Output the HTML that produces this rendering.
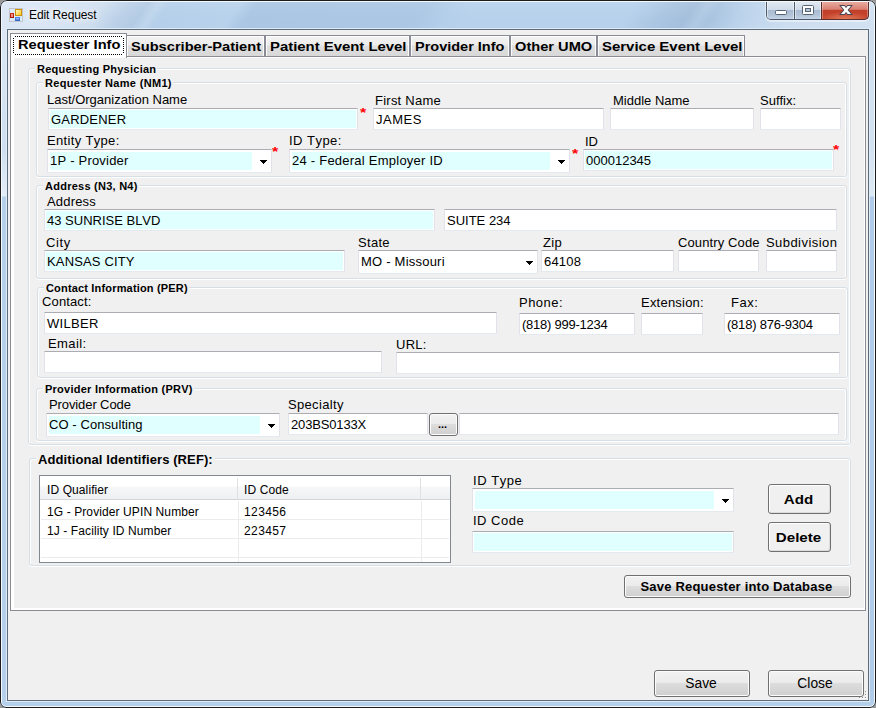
<!DOCTYPE html>
<html>
<head>
<meta charset="utf-8">
<title>Edit Request</title>
<style>
html,body{margin:0;padding:0;}
body{width:876px;height:708px;position:relative;overflow:hidden;background:#989898;
 font-family:"Liberation Sans",sans-serif;font-size:13px;color:#000;font-kerning:none;}
.win *{position:absolute;box-sizing:border-box;}
i{display:block;}
.win{position:absolute;left:0;top:0;width:876px;height:708px;box-sizing:border-box;
 border-radius:7px 7px 6px 6px;overflow:hidden;
 background:linear-gradient(180deg,rgba(255,255,255,.10) 0px,rgba(255,255,255,.03) 12px,rgba(255,255,255,0) 20px),linear-gradient(124deg,#dbe7f5 8.4px,#d8e5f4 58.0px,#cfdff0 87.0px,#bcd1e8 107.6px,#b3cbe5 124.2px,#bfd6ec 133.3px,#b5cfea 142.4px,#b8d2ec 200.3px,#aac6e3 215.2px,#abc7e4 355.7px,#b4cfea 380.5px,#b7d1ec 397.1px,#b7d1ec 529.4px,#aac5e1 558.4px,#a4bfdc 579.0px,#b0c9e3 589.8px,#a9c4e0 599.7px,#b9d1ea 620.4px,#c3d8ee 641.1px,#cddef0 670.0px,#d2e1f2 732.9px);}
.win .outer{left:0;top:0;width:876px;height:708px;border:1px solid #1c1c1c;border-radius:7px 7px 6px 6px;}
.win .edge{left:1px;top:1px;width:874px;height:706px;border:1px solid #f4f9fd;border-radius:6px 6px 5px 5px;}
.win .sideL{left:1px;top:29px;width:6px;height:677px;background:linear-gradient(180deg,#dbe7f4 0px,#cfdff1 120px,#e4edf8 167px,#b5d0ea 168px,#b5d0ea 100%);}
.win .sideR{left:869px;top:29px;width:6px;height:677px;background:linear-gradient(180deg,#d0e0f1 0px,#d3e2f2 120px,#dde9f5 167px,#b0cce8 168px,#b0cce8 100%);}
.win .sideB{left:2px;top:701px;width:872px;height:5px;background:#b5d0ea;}
.win .cglow{left:6px;top:28px;width:864px;height:674px;border:1px solid #dfecf8;}
.win .cborder{left:7px;top:29px;width:862px;height:672px;border:1px solid #5d6b7b;background:#f0f0f0;}
.title{left:29px;top:7px;font-size:12px;letter-spacing:-0.1px;line-height:16px;white-space:nowrap;text-shadow:0 0 5px rgba(255,255,255,.95),0 0 9px rgba(255,255,255,.8),0 0 12px rgba(255,255,255,.6);}
.l{white-space:nowrap;line-height:16px;font-size:13px;}
.s12{font-size:12px;letter-spacing:0.1px;}
.b11{white-space:nowrap;line-height:13px;font-size:11px;font-weight:bold;letter-spacing:0.25px;background:#f0f0f0;padding:0 1px 0 2px;}
.b13{white-space:nowrap;line-height:16px;font-size:13px;font-weight:bold;letter-spacing:0.1px;background:#f0f0f0;padding:0 2px 0 2px;}
.g{border:1px solid #d5dfe5;border-radius:3px;box-shadow:inset 1px 1px 0 #fff,inset -1px 0 0 #fff,0 1px 0 #fff;}
.t{border:1px solid #e2e3ea;border-top-color:#abadb3;border-bottom-color:#e3e9ef;background:#fff;font-size:13px;line-height:16px;white-space:nowrap;overflow:hidden;border-radius:1px;}
.t span{left:2px;top:3px;}
.t.c{background:#e0ffff;box-shadow:inset 0 0 0 1px #fff;}
.cy{background:#e0ffff;}
.star{color:#f00;font-weight:bold;font-size:16px;line-height:16px;transform:scaleY(0.82);transform-origin:0 3px;}
.arr{display:block;}
.btn{border:1px solid #707070;border-radius:3px;box-shadow:inset 0 0 0 1px #fcfcfc;
 background:linear-gradient(180deg,#f2f2f2 0%,#ebebeb 46%,#dddddd 50%,#cfcfcf 100%);white-space:nowrap;}
.btn.flat{background:#f0f0f0;box-shadow:inset 1px 1px 0 #fff,inset -1px -1px 0 #dcdcdc;}
.btn span{left:0;right:0;text-align:center;line-height:16px;}
.bb span{font-weight:bold;font-size:13.5px;top:7px;left:-2px;transform:scaleX(1.12);}
.bs span{font-weight:bold;font-size:13px;letter-spacing:0.2px;top:3px;left:-2px;}
.bn span{font-size:13.8px;top:5px;padding-right:2px;}
.tab{top:35px;height:21px;border:1px solid #898c95;border-bottom:none;font-weight:bold;font-size:13px;line-height:16px;white-space:nowrap;box-shadow:inset 1px 1px 0 rgba(255,255,255,.85),inset -1px 0 0 rgba(255,255,255,.85);
 background:linear-gradient(180deg,#f3f3f3 0%,#ececec 45%,#dfdfdf 50%,#d8d8d8 100%);}
.tab span{left:4px;top:3px;transform:scaleX(1.1);transform-origin:0 0;}
</style>
</head>
<body>
<div class="win">
 <div class="sideL"></div><div class="sideR"></div><div class="sideB"></div>
 <div class="cglow"></div>
 <div class="cborder"></div>

 <svg style="left:9px;top:8px" width="14" height="14" viewBox="0 0 14 14">
  <defs>
   <linearGradient id="gy" x1="0" y1="0" x2="1" y2="1"><stop offset="0" stop-color="#fff6c4"/><stop offset="1" stop-color="#ffc61a"/></linearGradient>
   <linearGradient id="gr" x1="0" y1="0" x2="0" y2="1"><stop offset="0" stop-color="#d8301f"/><stop offset="1" stop-color="#a31208"/></linearGradient>
   <linearGradient id="gb" x1="0" y1="0" x2="0" y2="1"><stop offset="0" stop-color="#5a90ee"/><stop offset="1" stop-color="#2c5fc8"/></linearGradient>
  </defs>
  <rect x="0.5" y="0.5" width="13" height="13" fill="#d6e6f8" fill-opacity=".5" stroke="#c3c5c9"/>
  <rect x="1" y="1" width="4" height="3" fill="#dcebfc"/><rect x="1" y="11" width="2" height="2" fill="#dcebfc"/><rect x="4" y="11" width="1" height="2" fill="#dcebfc"/><rect x="12" y="9" width="1" height="4" fill="#dcebfc"/>
  <rect x="1" y="5" width="4" height="5" fill="url(#gr)"/>
  <rect x="2" y="6" width="2" height="3" fill="#f3a196" opacity=".85"/>
  <rect x="6" y="1" width="7" height="7" fill="#c99208"/>
  <rect x="7" y="2" width="5" height="5" fill="url(#gy)"/>
  <rect x="6" y="9" width="5" height="4" fill="url(#gb)"/>
  <rect x="7" y="10" width="3" height="1.5" fill="#a4c2f8" opacity=".8"/>
 </svg>
 <div class="title">Edit Request</div>

 <div id="capbtns" style="left:766px;top:1px;width:103px;height:19px;border:1px solid #4c5a6b;border-top:none;border-radius:0 0 5px 5px;overflow:hidden;background:#c3d3e6;box-shadow:0 1px 0 1px rgba(255,255,255,.45);">
   <div style="left:0;top:0;width:28px;height:18px;background:linear-gradient(180deg,#e3ebf4 0%,#cfdbe9 48%,#a9bbd1 52%,#b4c5d9 80%,#c6d5e6 100%);border-right:1px solid #4c5a6b;box-shadow:inset 1px 0 0 rgba(255,255,255,.5),inset -1px 0 0 rgba(255,255,255,.5);"></div>
   <div style="left:28px;top:0;width:27px;height:18px;background:linear-gradient(180deg,#e3ebf4 0%,#cfdbe9 48%,#a9bbd1 52%,#b4c5d9 80%,#c6d5e6 100%);border-right:1px solid #4c5a6b;box-shadow:inset 1px 0 0 rgba(255,255,255,.5),inset -1px 0 0 rgba(255,255,255,.5);"></div>
   <div style="left:55px;top:0;width:46px;height:18px;background:radial-gradient(ellipse 24px 7px at 50% 100%,#e07a5a 0%,rgba(224,122,90,0) 100%),linear-gradient(180deg,#eab0a5 0%,#d98173 46%,#c23f29 52%,#c8482f 100%);box-shadow:inset 1px 0 0 rgba(255,255,255,.3),inset -1px 0 0 rgba(255,255,255,.3);"></div>
   <div style="left:8px;top:9px;width:12px;height:5px;background:#fff;border:1px solid #566373;border-radius:1.5px;"></div>
   <div style="left:35px;top:4px;width:12px;height:10px;background:#fff;border:1px solid #566373;border-radius:1.5px;"></div>
   <div style="left:38px;top:7px;width:6px;height:4px;background:#b5c5d9;border:1px solid #566373;"></div>
   <svg style="left:72px;top:3px;" width="14" height="12" viewBox="0 0 14 12"><defs><clipPath id="cx1"><rect x="0" y="1" width="14" height="10"/></clipPath><clipPath id="cx2"><rect x="0" y="2" width="14" height="8"/></clipPath></defs><g clip-path="url(#cx1)" stroke="#4a4752" stroke-width="4.3"><line x1="0.75" y1="-1.5" x2="13.25" y2="13.5"/><line x1="13.25" y1="-1.5" x2="0.75" y2="13.5"/></g><g clip-path="url(#cx2)" stroke="#fff" stroke-width="2.5"><line x1="0.75" y1="-1.5" x2="13.25" y2="13.5"/><line x1="13.25" y1="-1.5" x2="0.75" y2="13.5"/></g></svg>
 </div>

 <div style="left:10px;top:56px;width:856px;height:555px;border:1px solid #898c95;background:#fff;"></div>
 <div style="left:14px;top:58px;width:850px;height:550px;background:#f0f0f0;"></div>

 <div class="tab" style="left:126px;width:139px;"><span style="transform:scaleX(1.125)">Subscriber-Patient</span></div>
 <div class="tab" style="left:265px;width:145px;"><span style="transform:scaleX(1.145)">Patient Event Level</span></div>
 <div class="tab" style="left:410px;width:100px;"><span style="transform:scaleX(1.115)">Provider Info</span></div>
 <div class="tab" style="left:510px;width:87px;"><span style="transform:scaleX(1.125)">Other UMO</span></div>
 <div class="tab" style="left:597px;width:148px;"><span style="transform:scaleX(1.15)">Service Event Level</span></div>
 <div class="tab" style="left:10px;top:33px;width:117px;height:25px;background:#fff;"><span style="left:7px;top:3px;transform:scaleX(1.125)">Requester Info</span>
   <svg style="left:2px;top:2px;" width="111" height="19"><path d="M1.5 0.5H109.5M1.5 18.5H109.5M0.5 1.5V17.5M110.5 1.5V17.5" fill="none" stroke="#000" stroke-width="1" stroke-dasharray="1 1" shape-rendering="crispEdges"/></svg>
 </div>

 <div class="g" style="left:28px;top:68px;width:823px;height:377px;"></div>
 <div class="b11" style="left:35px;top:63px;">Requesting Physician</div>
 <div class="g" style="left:36px;top:82px;width:811px;height:95px;"></div>
 <div class="b11" style="left:43px;top:77px;letter-spacing:0.32px;">Requester Name (NM1)</div>
 <div class="g" style="left:36px;top:185px;width:811px;height:94px;"></div>
 <div class="b11" style="left:43px;top:180px;">Address (N3, N4)</div>
 <div class="g" style="left:37px;top:287px;width:811px;height:91px;"></div>
 <div class="b11" style="left:44px;top:282px;letter-spacing:0.17px;">Contact Information (PER)</div>
 <div class="g" style="left:36px;top:388px;width:811px;height:53px;"></div>
 <div class="b11" style="left:43px;top:383px;">Provider Information (PRV)</div>
 <div class="g" style="left:29px;top:458px;width:822px;height:108px;"></div>
 <div class="b13" style="left:36px;top:452px;">Additional Identifiers (REF):</div>
 <div class="l" style="left:47px;top:92px;">Last/Organization Name</div>
 <div class="t c" style="left:48px;top:108px;width:310px;height:22px;"><span style="letter-spacing:0.2px;">GARDENER</span></div>
 <div class="star" style="left:360px;top:106px;">*</div>
 <div class="l" style="left:375px;top:93px;letter-spacing:0.24px;">First Name</div>
 <div class="t" style="left:373px;top:108px;width:231px;height:22px;"><span style="letter-spacing:0.5px;">JAMES</span></div>
 <div class="l" style="left:613px;top:93px;">Middle Name</div>
 <div class="t" style="left:610px;top:108px;width:144px;height:22px;"></div>
 <div class="l" style="left:760px;top:93px;">Suffix:</div>
 <div class="t" style="left:760px;top:108px;width:81px;height:22px;"></div>
 <div class="l" style="left:47px;top:133px;letter-spacing:0.33px;">Entity Type:</div>
 <div class="t cb" style="left:47px;top:149px;width:225px;height:24px;"><i class="cy" style="left:2px;top:2px;width:202px;height:18px;"></i><span style="letter-spacing:0.21px;">1P - Provider</span><svg class="arr" style="left:212px;top:10px;" width="7" height="4" viewBox="0 0 7 4" shape-rendering="crispEdges"><path d="M0 0h7v1h-1v1h-1v1h-1v1h-1v-1h-1v-1h-1v-1h-1z" fill="#000"/></svg></div>
 <div class="star" style="left:272px;top:145px;">*</div>
 <div class="l" style="left:289px;top:133px;letter-spacing:0.47px;">ID Type:</div>
 <div class="t cb" style="left:289px;top:149px;width:281px;height:24px;"><i class="cy" style="left:2px;top:2px;width:258px;height:18px;"></i><span style="letter-spacing:0.24px;">24 - Federal Employer ID</span><svg class="arr" style="left:268px;top:10px;" width="7" height="4" viewBox="0 0 7 4" shape-rendering="crispEdges"><path d="M0 0h7v1h-1v1h-1v1h-1v1h-1v-1h-1v-1h-1v-1h-1z" fill="#000"/></svg></div>
 <div class="star" style="left:572px;top:147px;">*</div>
 <div class="l" style="left:585px;top:134px;">ID</div>
 <div class="star" style="left:833px;top:143px;">*</div>
 <div class="t c" style="left:583px;top:149px;width:251px;height:22px;"><span style="">000012345</span></div>
 <div class="l" style="left:47px;top:194px;letter-spacing:0.17px;">Address</div>
 <div class="t c" style="left:44px;top:209px;width:391px;height:22px;"><span style="">43 SUNRISE BLVD</span></div>
 <div class="t" style="left:444px;top:209px;width:393px;height:22px;"><span style="">SUITE 234</span></div>
 <div class="l" style="left:46px;top:235px;letter-spacing:0.65px;">City</div>
 <div class="t c" style="left:44px;top:250px;width:301px;height:22px;"><span style="letter-spacing:0.15px;">KANSAS CITY</span></div>
 <div class="l" style="left:358px;top:235px;letter-spacing:0.3px;">State</div>
 <div class="t cb" style="left:358px;top:250px;width:180px;height:24px;"><span style="letter-spacing:0.22px;">MO - Missouri</span><svg class="arr" style="left:167px;top:10px;" width="7" height="4" viewBox="0 0 7 4" shape-rendering="crispEdges"><path d="M0 0h7v1h-1v1h-1v1h-1v1h-1v-1h-1v-1h-1v-1h-1z" fill="#000"/></svg></div>
 <div class="l" style="left:543px;top:235px;letter-spacing:0.3px;">Zip</div>
 <div class="t" style="left:541px;top:250px;width:133px;height:22px;"><span style="letter-spacing:0.2px;">64108</span></div>
 <div class="l" style="left:678px;top:235px;letter-spacing:0.12px;">Country Code</div>
 <div class="t" style="left:678px;top:250px;width:81px;height:22px;"></div>
 <div class="l" style="left:766px;top:235px;letter-spacing:0.44px;">Subdivision</div>
 <div class="t" style="left:766px;top:250px;width:71px;height:22px;"></div>
 <div class="l" style="left:42px;top:294px;letter-spacing:0.13px;">Contact:</div>
 <div class="t" style="left:44px;top:312px;width:453px;height:22px;"><span style="letter-spacing:0.33px;">WILBER</span></div>
 <div class="l" style="left:519px;top:295px;letter-spacing:0.48px;">Phone:</div>
 <div class="t" style="left:519px;top:313px;width:116px;height:22px;"><span style="letter-spacing:-0.25px;">(818) 999-1234</span></div>
 <div class="l" style="left:641px;top:295px;letter-spacing:0.22px;">Extension:</div>
 <div class="t" style="left:641px;top:313px;width:62px;height:22px;"></div>
 <div class="l" style="left:731px;top:295px;letter-spacing:0.5px;">Fax:</div>
 <div class="t" style="left:724px;top:313px;width:116px;height:22px;"><span style="letter-spacing:-0.22px;">(818) 876-9304</span></div>
 <div class="l" style="left:48px;top:336px;letter-spacing:0.4px;">Email:</div>
 <div class="t" style="left:44px;top:351px;width:338px;height:22px;"></div>
 <div class="l" style="left:396px;top:337px;letter-spacing:0.25px;">URL:</div>
 <div class="t" style="left:396px;top:352px;width:444px;height:22px;"></div>
 <div class="l" style="left:49px;top:397px;letter-spacing:-0.1px;">Provider Code</div>
 <div class="t cb" style="left:46px;top:413px;width:234px;height:24px;"><i class="cy" style="left:2px;top:2px;width:211px;height:18px;"></i><span style="letter-spacing:0.08px;">CO - Consulting</span><svg class="arr" style="left:221px;top:10px;" width="7" height="4" viewBox="0 0 7 4" shape-rendering="crispEdges"><path d="M0 0h7v1h-1v1h-1v1h-1v1h-1v-1h-1v-1h-1v-1h-1z" fill="#000"/></svg></div>
 <div class="l" style="left:288px;top:397px;letter-spacing:0.33px;">Specialty</div>
 <div class="t" style="left:288px;top:413px;width:140px;height:22px;"><span style="letter-spacing:-0.15px;">203BS0133X</span></div>
 <div class="btn" style="left:429px;top:413px;width:29px;height:23px;"><span style="left:8px;top:2px;right:auto;font-size:11px;font-weight:bold;letter-spacing:-0.1px;">...</span></div>
 <div class="t" style="left:459px;top:413px;width:380px;height:22px;"></div>
 <div id="lv" style="left:39px;top:475px;width:412px;height:88px;border:1px solid #828790;background:#fff;">
 <i style="left:0;top:0;width:410px;height:23px;background:linear-gradient(180deg,#fff 0px,#fff 10px,#f6f7f8 11px,#eff0f2 23px);"></i>
 <i style="left:0;top:23px;width:410px;height:1px;background:#d5d5d5;"></i>
 <i style="left:197px;top:2px;width:1px;height:21px;background:#dfe0e2;"></i>
 <i style="left:380px;top:2px;width:1px;height:21px;background:#dfe0e2;"></i>
 <i style="left:198px;top:25px;width:1px;height:61px;background:#ebebeb;"></i>
 <i style="left:381px;top:25px;width:1px;height:61px;background:#ebebeb;"></i>
 <i style="left:1px;top:43px;width:408px;height:1px;background:#ececec;"></i>
 <i style="left:1px;top:62px;width:408px;height:1px;background:#ececec;"></i>
 <i style="left:1px;top:81px;width:408px;height:1px;background:#ececec;"></i>
 <div class="l s12" style="left:7px;top:6px;">ID Qualifier</div>
 <div class="l s12" style="left:204px;top:6px;">ID Code</div>
 <div class="l s12" style="left:7px;top:28px;">1G - Provider UPIN Number</div>
 <div class="l s12" style="left:204px;top:28px;letter-spacing:.4px;">123456</div>
 <div class="l s12" style="left:7px;top:47px;">1J - Facility ID Number</div>
 <div class="l s12" style="left:204px;top:47px;letter-spacing:.4px;">223457</div>
</div>
 <div class="l" style="left:473px;top:473px;letter-spacing:0.55px;">ID Type</div>
 <div class="t cb" style="left:472px;top:488px;width:262px;height:24px;"><i class="cy" style="left:2px;top:2px;width:239px;height:18px;"></i><svg class="arr" style="left:249px;top:10px;" width="7" height="4" viewBox="0 0 7 4" shape-rendering="crispEdges"><path d="M0 0h7v1h-1v1h-1v1h-1v1h-1v-1h-1v-1h-1v-1h-1z" fill="#000"/></svg></div>
 <div class="l" style="left:473px;top:513px;letter-spacing:0.5px;">ID Code</div>
 <div class="t c" style="left:472px;top:531px;width:262px;height:22px;"></div>
 <i style="left:865px;top:691px;width:1px;height:1px;background:#929292;box-shadow:1px 1px 0 #fff"></i><i style="left:865px;top:694px;width:1px;height:1px;background:#929292;box-shadow:1px 1px 0 #fff"></i><i style="left:865px;top:697px;width:1px;height:1px;background:#929292;box-shadow:1px 1px 0 #fff"></i><i style="left:862px;top:697px;width:1px;height:1px;background:#929292;box-shadow:1px 1px 0 #fff"></i><i style="left:859px;top:697px;width:1px;height:1px;background:#929292;box-shadow:1px 1px 0 #fff"></i><i style="left:862px;top:694px;width:1px;height:1px;background:#929292;box-shadow:1px 1px 0 #fff"></i>
 <div class="btn flat bb" style="left:768px;top:484px;width:63px;height:30px;"><span>Add</span></div>
 <div class="btn flat bb" style="left:768px;top:522px;width:63px;height:30px;"><span>Delete</span></div>
 <div class="btn bs" style="left:624px;top:575px;width:227px;height:23px;"><span>Save Requester into Database</span></div>
 <div class="btn bn" style="left:654px;top:670px;width:96px;height:27px;"><span>Save</span></div>
 <div class="btn bn" style="left:768px;top:670px;width:96px;height:27px;"><span>Close</span></div>
 <div style="left:821px;top:1px;width:48px;height:19px;border:1px solid #5e2f2a;border-top:none;border-radius:0 0 5px 0;"></div>
 <div class="edge"></div><div class="outer"></div>
</div>
</body>
</html>
